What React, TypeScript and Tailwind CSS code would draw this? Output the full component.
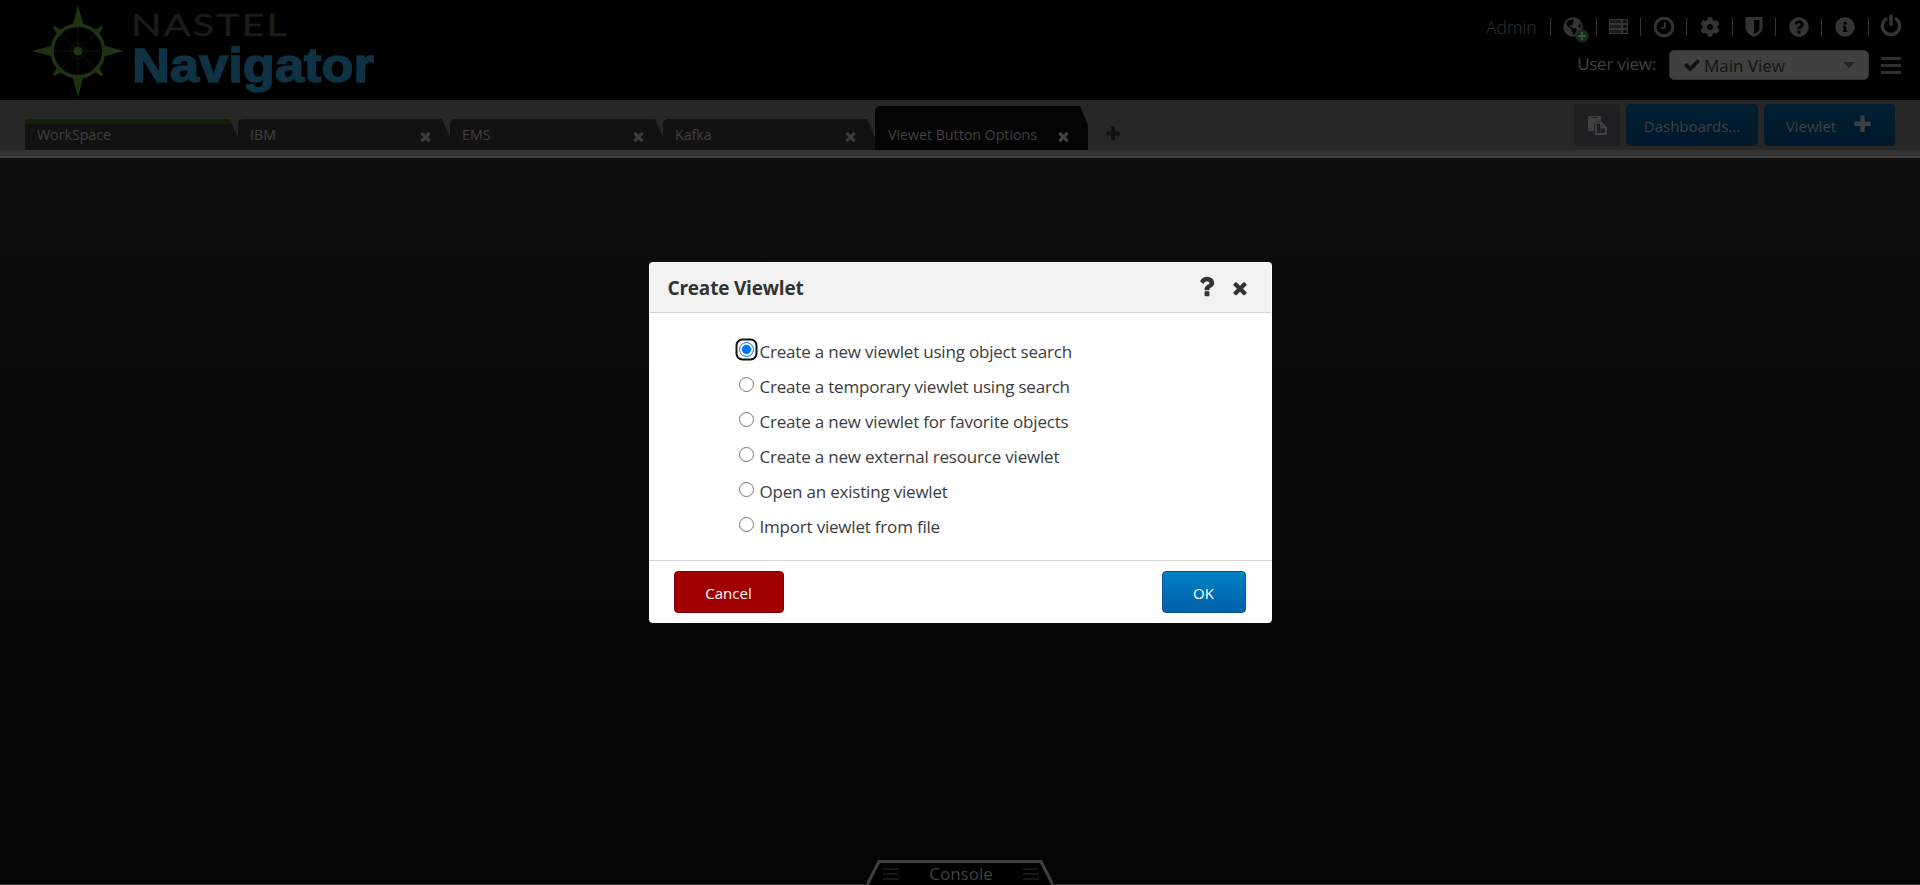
import React from "react";
import { FaCog, FaQuestionCircle, FaInfoCircle, FaGlobeAmericas } from "react-icons/fa";

const PATHS = {
  times:
    "M1490 1322q0 40-28 68l-136 136q-28 28-68 28t-68-28l-294-294-294 294q-28 28-68 28t-68-28l-136-136q-28-28-28-68t28-68l294-294-294-294q-28-28-28-68t28-68l136-136q28-28 68-28t68 28l294 294 294-294q28-28 68-28t68 28l136 136q28 28 28 68t-28 68l-294 294 294 294q28 28 28 68z",
  plus: "M1600 736v192q0 40-28 68t-68 28h-416v416q0 40-28 68t-68 28h-192q-40 0-68-28t-28-68v-416h-416q-40 0-68-28t-28-68v-192q0-40 28-68t68-28h416v-416q0-40 28-68t68-28h192q40 0 68 28t28 68v416h416q40 0 68 28t28 68z",
  question:
    "M1088 1256v240q0 16-12 28t-28 12h-240q-16 0-28-12t-12-28v-240q0-16 12-28t28-12h240q16 0 28 12t12 28zm316-600q0 54-15.500 101t-35 76.500-55 59.500-57.500 43.500-61 35.500q-41 23-68.500 65t-27.500 67q0 17-12 32.500t-28 15.500h-240q-15 0-25.500-18.500t-10.500-37.500v-45q0-83 65-156.500t143-108.500q59-27 84-56t25-76q0-42-46.500-74t-107.500-32q-65 0-108 29-35 25-107 115-13 16-31 16-12 0-25-8l-164-125q-13-10-15.500-25t5.500-28q160-266 464-266 80 0 161 31t146 83 106 127.500 41 158.500z",
  clock:
    "M1024 544v448q0 14-9 23t-23 9h-320q-14 0-23-9t-9-23v-64q0-14 9-23t23-9h224v-352q0-14 9-23t23-9h64q14 0 23 9t9 23zm416 352q0-148-73-273t-198-198-273-73-273 73-198 198-73 273 73 273 198 198 273 73 273-73 198-198 73-273zm224 0q0 209-103 385.500t-279.500 279.500-385.500 103-385.500-103-279.500-279.500-103-385.500 103-385.500 279.500-279.500 385.500-103 385.500 103 279.500 279.500 103 385.500z",
  power:
    "M1664 896q0 156-61 298t-164 245-245 164-298 61-298-61-245-164-164-245-61-298q0-182 80.500-343t226.500-270q43-32 95.500-25t83.500 50q32 42 24.500 94.500t-49.500 84.500q-98 74-151.500 181t-53.500 228q0 104 40.500 198.500t109.500 163.500 163.500 109.500 198.500 40.500 198.500-40.500 163.500-109.500 109.500-163.500 40.500-198.500q0-121-53.500-228t-151.500-181q-42-32-49.500-84.500t24.500-94.500q31-43 84-50t95 25q146 109 226.500 270t80.500 343zm-640-768v640q0 52-38 90t-90 38-90-38-38-90v-640q0-52 38-90t90-38 90 38 38 90z",
  check:
    "M1671 566q0 40-28 68l-724 724-136 136q-28 28-68 28t-68-28l-136-136-362-362q-28-28-28-68t28-68l136-136q28-28 68-28t68 28l294 295 656-657q28-28 68-28t68 28l136 136q28 28 28 68z",
};

function Glyph({ name, className }: { name: keyof typeof PATHS; className: string }) {
  return (
    <svg viewBox="0 0 1792 1792" fill="currentColor" className={className}>
      <path d={PATHS[name]} />
    </svg>
  );
}

function Compass() {
  return (
    <svg viewBox="0 0 94 94" className="mt-1 ml-[31px] h-[94px] w-[94px] shrink-0 text-[#1e3312]" fill="currentColor">
      {[0, 90, 180, 270].map((a) => (
        <path key={a} transform={`rotate(${a} 47 47)`} d="M47 1L50.500 14L53 23H41L43.500 14Z" />
      ))}
      {[45, 135, 225, 315].map((a) => (
        <path key={a} transform={`rotate(${a} 47 47)`} d="M45.800 12.500H48.200L50 21V23H44V21Z" />
      ))}
      <circle cx="47" cy="47" r="25.800" fill="none" stroke="currentColor" strokeWidth="3.500" />
      <g fill="none" stroke="currentColor" strokeWidth="1" opacity="0.4">
        <circle cx="47" cy="47" r="8" />
        <path d="M47 22V72M22 47H72M29 29L65 65M65 29L29 65" />
      </g>
      <circle cx="47" cy="47" r="4.500" />
    </svg>
  );
}

function Tab({ label, first = false }: { label: string; first?: boolean }) {
  return first ? (
    <div className="flex h-[31px] items-center rounded-tl-[3px] border-t-[5px] border-[#142109] bg-[#121212] pb-1 pl-3">
      <span>{label}</span>
    </div>
  ) : (
    <div className="flex h-[31px] items-center justify-between rounded-tl-[5px] bg-[#121212] pr-[17px] pl-3">
      <span>{label}</span>
      <Glyph name="times" className="mt-[3px] h-[15px] w-[15px] text-[#3b3b3b]" />
    </div>
  );
}

function Cell({ className, children }: { className: string; children: React.ReactNode }) {
  return <div className={`flex h-[18px] items-center justify-center border-l border-[#343434] ${className}`}>{children}</div>;
}

function Grip() {
  return (
    <div className="flex w-4 flex-col gap-[3px]">
      <i className="h-[2px] bg-[#161616]" />
      <i className="h-[2px] bg-[#161616]" />
      <i className="h-[2px] bg-[#161616]" />
    </div>
  );
}

const options = [
  "Create a new viewlet using object search",
  "Create a temporary viewlet using search",
  "Create a new viewlet for favorite objects",
  "Create a new external resource viewlet",
  "Open an existing viewlet",
  "Import viewlet from file",
];

const cut = "[clip-path:polygon(0_0,calc(100%_-_8px)_0,100%_19px,100%_100%,0_100%)]";

export default function App() {
  return (
    <div className="relative flex h-[885px] w-[1920px] flex-col overflow-hidden bg-black font-['Open_Sans',sans-serif] text-[#404040]">
      <header className="flex h-[100px] shrink-0 justify-between bg-black">
        <div className="flex">
          <Compass />
          <svg viewBox="0 0 250 96" className="ml-[8px] h-[96px] w-[250px] overflow-visible">
            <text x="-2" y="36" fontFamily="Lato, sans-serif" fontSize="31" fill="#1b1b1b" stroke="#1b1b1b" strokeWidth="0.400" letterSpacing="1.500" textLength="158" lengthAdjust="spacingAndGlyphs">NASTEL</text>
            <text x="-1" y="81.500" fontFamily="'Liberation Sans', sans-serif" fontWeight="700" fontSize="48" fill="#0f3344" stroke="#0f3344" strokeWidth="1.500" textLength="242" lengthAdjust="spacingAndGlyphs">Navigator</text>
          </svg>
        </div>
        <div className="flex flex-col">
          <div className="mt-4 flex h-[22px] items-center pr-2 text-[#343434]">
            <span className="w-[64px] text-[17.500px] font-light whitespace-nowrap">Admin</span>
            <Cell className="w-[46px]">
              <span className="relative -ml-[2px]">
                <FaGlobeAmericas className="h-5 w-5" />
                <svg viewBox="0 0 14 14" className="absolute top-3 left-3 h-[14px] w-[14px]">
                  <circle cx="7" cy="7" r="6.500" fill="#10301c" />
                  <path d="M7 3V11M3 7H11" stroke="#454f48" strokeWidth="2" />
                </svg>
              </span>
            </Cell>
            <Cell className="w-[44px]">
              <svg viewBox="0 0 19 15" className="-mt-[2px] h-[15px] w-[19px]">
                {[0, 5, 10].map((y) => (
                  <g key={y}>
                    <rect x="0.500" y={y + 0.5} width="18" height="4" fill="#1c1c1c" stroke="#343434" />
                    <rect x="12" y={y + 1} width="2" height="3" fill="#343434" />
                    <rect x="14.500" y={y + 1.5} width="2" height="2" fill="#000" />
                  </g>
                ))}
              </svg>
            </Cell>
            <Cell className="w-[46px]"><Glyph name="clock" className="h-6 w-6" /></Cell>
            <Cell className="w-[46px]"><FaCog className="h-5 w-5" /></Cell>
            <Cell className="w-[43px]">
              <svg viewBox="0 0 18 20" className="h-5 w-[18px]" fill="currentColor">
                <path fillRule="evenodd" d="M0.500 0H17.500V11Q17 16.500 9 20Q1 16.500 0.500 11ZM9 3V17Q14.500 14 14.500 10.500V3Z" />
              </svg>
            </Cell>
            <Cell className="w-[46px]"><FaQuestionCircle className="h-5 w-5" /></Cell>
            <Cell className="w-[47px]"><FaInfoCircle className="h-5 w-5" /></Cell>
            <Cell className="w-[44px]"><Glyph name="power" className="-mt-[2px] h-6 w-6" /></Cell>
          </div>
          <div className="mt-3 flex h-[30px] items-center justify-end pr-[19px]">
            <span className="mr-[13px] -mt-[3px] text-[17px] tracking-[-0.250px]">User view:</span>
            <div className="flex h-[30px] w-[200px] items-center rounded-[5px] border border-[#303030] bg-[#404040] px-[13px] text-[#121212]">
              <Glyph name="check" className="h-[18px] w-[18px]" />
              <span className="ml-[3px] flex-1 pt-px text-[17px]">Main View</span>
              <i className="border-x-[6px] border-t-[6px] border-x-transparent border-t-[#242424]" />
            </div>
            <div className="ml-3 flex w-5 flex-col gap-1">
              <i className="h-[3px] bg-[#303030]" />
              <i className="h-[3px] bg-[#303030]" />
              <i className="h-[3px] bg-[#303030]" />
            </div>
          </div>
        </div>
      </header>

      <nav className="flex h-[50px] shrink-0 items-end bg-[#272727] pl-[25px] text-[14.200px]">
        <div className={`w-[213px] ${cut}`}><Tab label="WorkSpace" first /></div>
        <div className={`w-[212px] ${cut}`}><Tab label="IBM" /></div>
        <div className={`w-[213px] ${cut}`}><Tab label="EMS" /></div>
        <div className={`w-[212px] ${cut}`}><Tab label="Kafka" /></div>
        <div className={`flex h-[44px] w-[213px] items-end justify-between rounded-tl-[5px] bg-[#040404] pr-[17px] pb-[5px] pl-[13px] ${cut}`}>
          <span>Viewet Button Options</span>
          <Glyph name="times" className="mb-[1px] h-[15px] w-[15px]" />
        </div>
        <Glyph name="plus" className="mb-[7px] ml-4 h-[18px] w-[18px] text-[#0f1112]" />
        <div className="mr-[25px] mb-1 ml-auto flex h-[42px] gap-[6px] text-[15px]">
          <div className="flex w-[46px] items-center justify-center rounded bg-[#1e1f21]">
            <svg viewBox="0 0 19 19" className="h-[19px] w-[19px]">
              <path fillRule="evenodd" d="M1 0H13V5H9L6 8V15H0V1ZM3 1V2H10V1Z" fill="#404040" />
              <path d="M8 6.500H13L18 11.500V18H8Z" fill="#1e1f21" stroke="#404040" strokeWidth="1.800" />
              <path d="M13 6.500V11.500H18" fill="none" stroke="#404040" strokeWidth="1.800" />
            </svg>
          </div>
          <div className="flex w-[132px] items-center justify-center rounded border border-[#051b29] bg-linear-to-b from-[#002033] to-[#00182b] pt-[2px]">Dashboards...</div>
          <div className="flex w-[131px] items-center justify-center gap-4 rounded border border-[#051b29] bg-linear-to-b from-[#002033] to-[#00182b]">
            <span className="pt-[2px]">Viewlet</span><Glyph name="plus" className="-mt-[2px] h-[21px] w-[21px]" />
          </div>
        </div>
      </nav>
      <div className="h-2 shrink-0 border-b-2 border-[#404040] bg-[#333]" />

      <main className="flex min-h-0 flex-1 flex-col items-center bg-linear-to-b from-[#0d0d0d] to-[#050505]">
        <section className="mt-[104px] flex h-[361px] w-[623px] shrink-0 flex-col overflow-hidden rounded bg-white text-[#333]">
          <div className="mx-px mt-px flex h-[50px] shrink-0 items-center border-b border-[#d5d5d5] bg-[#f2f2f2] pr-[21px] pl-[18px]">
            <h1 className="flex-1 pt-px text-[19px] font-bold tracking-[-0.200px]">Create Viewlet</h1>
            <Glyph name="question" className="-mt-[2px] h-[27px] w-[27px]" />
            <Glyph name="times" className="ml-[10px] h-5 w-5" />
          </div>
          <div className="flex h-[247px] shrink-0 flex-col pt-[21px] pl-[90px]">
            {options.map((option, i) => (
              <label key={option} className="flex h-[35px] shrink-0 items-center text-[17px] tracking-[-0.200px] whitespace-nowrap text-[#3a3c3e]">
                <svg viewBox="0 0 23 23" className="mr-[2px] -mt-[4px] -ml-[4px] h-[23px] w-[23px]">
                  {i === 0 && <rect x="1.500" y="1.500" width="20" height="20" rx="6" fill="white" stroke="#101010" strokeWidth="2" />}
                  <circle cx="11.500" cy="11.500" r="7" fill="white" stroke={i === 0 ? "#0075ff" : "#767676"} />
                  {i === 0 && <circle cx="11.500" cy="11.500" r="4.700" fill="#0075ff" />}
                </svg>
                {option}
              </label>
            ))}
          </div>
          <div className="flex flex-1 items-start justify-between border-t border-[#d5d5d5] pt-[10px] pr-[26px] pl-[25px] text-[15px] text-white">
            <button className="h-[42px] w-[110px] rounded border border-[#85000c] bg-[#a00000] pt-[2px]">Cancel</button>
            <button className="h-[42px] w-[84px] rounded border border-[#075590] bg-linear-to-b from-[#0080c4] to-[#0060aa] pt-[2px]">OK</button>
          </div>
        </section>
        <footer className="mt-auto flex h-[25px] w-full items-end">
          <i className="h-px flex-1 bg-[#333]" />
          <div className="relative h-[25px] w-[186px]">
            <svg viewBox="0 0 186 25" className="absolute inset-0 h-[25px] w-[186px]">
              <path d="M0 25L12 1.500H174L186 25" fill="#000" stroke="#404040" strokeWidth="3" />
            </svg>
            <div className="relative flex h-[25px] items-center justify-between pr-[14px] pl-4 pt-[3px]">
              <Grip />
              <span className="text-[17px] leading-[20px]">Console</span>
              <Grip />
            </div>
          </div>
          <i className="h-px flex-1 bg-[#333]" />
        </footer>
      </main>
    </div>
  );
}
